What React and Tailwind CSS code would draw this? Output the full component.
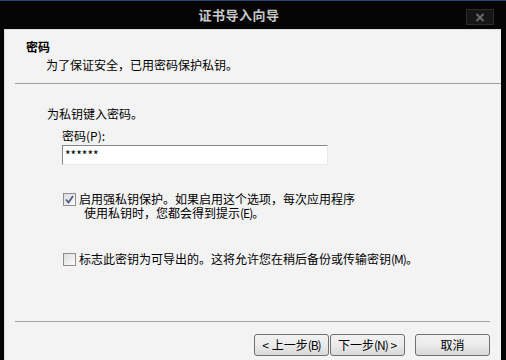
import React from "react";

const font = { fontFamily: '"Noto Sans CJK SC", "Noto Sans", sans-serif' };

// Windows-7 style checkbox
const CheckBox = ({ checked }) => (
  <div className="w-[13px] h-[13px] border border-[#8e8f8f] bg-gradient-to-br from-[#dcdcdc] to-[#fbfbfb] flex items-center justify-center shrink-0">
    {checked && (
      <svg width="11" height="11" viewBox="0 0 11 11">
        <path d="M2 5.5 L4.5 8.5 L9 2" fill="none" stroke="#4b5d8f" strokeWidth="1.8" />
      </svg>
    )}
  </div>
);

const WizButton = ({ children, className = "" }) => (
  <button
    className={
      "h-[22px] w-[75px] border border-[#707070] rounded-[3px] bg-gradient-to-b from-[#f2f2f2] via-[#ebebeb] to-[#d8d8d8] text-[12px] text-black flex items-center justify-center leading-none " +
      className
    }
  >
    {children}
  </button>
);

export default function App() {
  return (
    <div className="w-[506px] h-[360px] bg-[#050505] flex flex-col overflow-hidden select-none" style={font}>
      {/* title bar */}
      <div className="h-[29px] shrink-0 relative flex items-center justify-center border-t border-[#27466e]">
        <span className="text-[13px] font-bold text-[#c9c9c9] tracking-[0.5px] mr-[28px]">证书导入向导</span>
        <div className="absolute left-[466px] top-[8px] w-[28px] h-[16px] bg-[#161616] border border-[#2a2a2a] flex items-center justify-center">
          <svg width="10" height="9" viewBox="0 0 10 9">
            <path d="M1.5 1 L8.5 8 M8.5 1 L1.5 8" stroke="#6a6a6a" strokeWidth="2" />
          </svg>
        </div>
      </div>

      {/* body */}
      <div className="flex-1 flex ml-[4px] mr-[5px]">
        <div className="flex-1 bg-[#f3f3f3] border-l border-t border-[#dcdcdc] flex flex-col text-[12px] text-black leading-[16px]">
          {/* header */}
          <div className="pt-[9px] pl-[21px] font-bold">密码</div>
          <div className="pl-[41px] mt-[2px]">为了保证安全，已用密码保护私钥。</div>
          <div className="ml-[10px] mt-[10px] h-px bg-[#a0a0a0]" />

          {/* content */}
          <div className="pl-[42px] mt-[22px]">为私钥键入密码。</div>
          <div className="pl-[57px] mt-[6px]">密码(P):</div>
          <div className="ml-[57px] mt-[1px] w-[266px] h-[20px] bg-white border border-t-[#828790] border-l-[#828790] border-r-[#e3e9ef] border-b-[#e3e9ef] flex items-center pl-[2px] text-[12px]">
            ******
          </div>

          <div className="flex items-start ml-[58px] mt-[25px] gap-[3px]">
            <div className="mt-[3px]">
              <CheckBox checked />
            </div>
            <div className="leading-[14px] pt-[2px]">
              <div>启用强私钥保护。如果启用这个选项，每次应用程序</div>
              <div className="pl-[5px]">
                使用私钥时，您都会得到提示<span className="tracking-[-1px]">(E)</span>。
              </div>
            </div>
          </div>

          <div className="flex items-center ml-[58px] mt-[31px] gap-[3px]">
            <CheckBox />
            <div>
              标志此密钥为可导出的。这将允许您在稍后备份或传输密钥<span className="tracking-[-1px]">(M)</span>。
            </div>
          </div>

          <div className="ml-[10px] mr-[11px] mt-[54px] h-px bg-[#a0a0a0]" />

          {/* buttons */}
          <div className="flex justify-end mt-[12px] mr-[11px]">
            <WizButton>&lt; 上一步<span className="tracking-[-1px]">(B)</span></WizButton>
            <WizButton className="ml-px">下一步<span className="tracking-[-1px]">(N)</span>&nbsp;&gt;</WizButton>
            <WizButton className="ml-[10px]">取消</WizButton>
          </div>
        </div>
      </div>
    </div>
  );
}
